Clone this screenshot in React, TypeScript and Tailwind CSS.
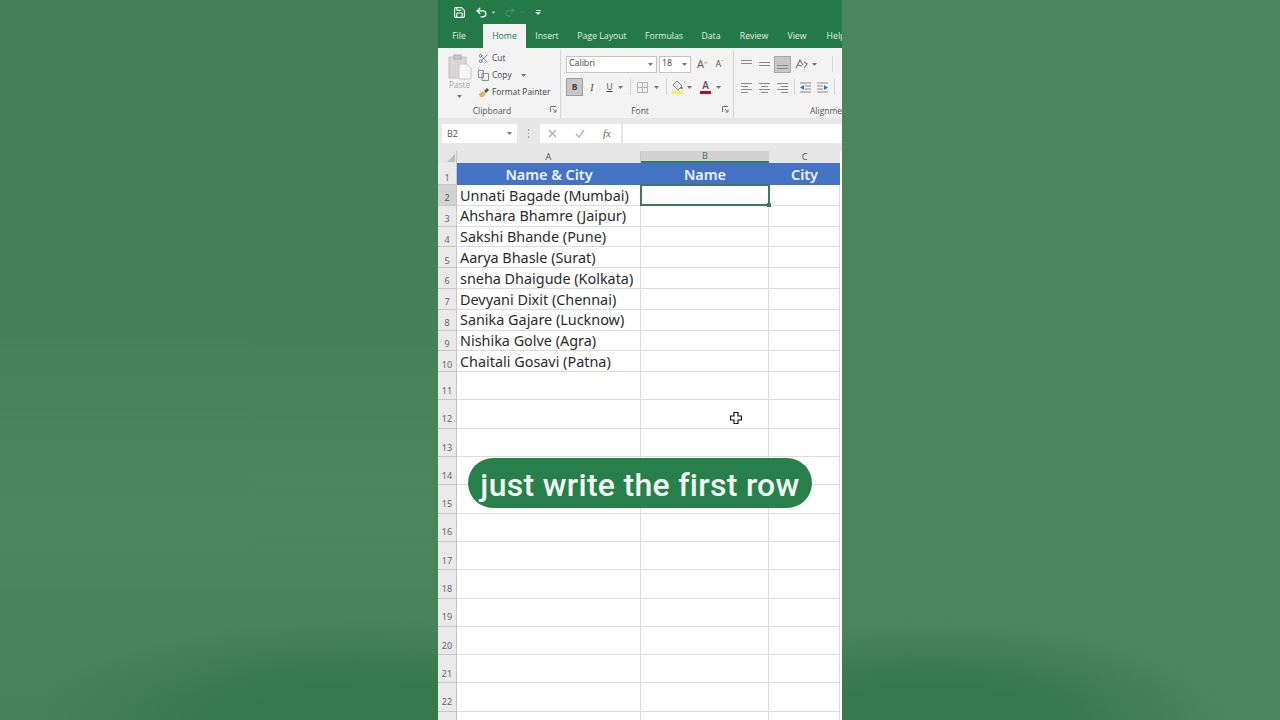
import type { ReactNode } from 'react';
import { Redo2, Save, Scissors, Undo2 } from 'lucide-react';

const tabs = [
  { label: 'File', w: 'w-[45px] pr-[3px]' },
  { label: 'Home', w: 'w-[43px]', active: true },
  { label: 'Insert', w: 'w-[42px]' },
  { label: 'Page Layout', w: 'w-[68px]' },
  { label: 'Formulas', w: 'w-[56px]' },
  { label: 'Data', w: 'w-[38px]' },
  { label: 'Review', w: 'w-[48px]' },
  { label: 'View', w: 'w-[38px]' },
  { label: 'Help', w: 'w-[40px]' },
];

const people = [
  'Unnati Bagade (Mumbai)',
  'Ahshara Bhamre (Jaipur)',
  'Sakshi Bhande (Pune)',
  'Aarya Bhasle (Surat)',
  'sneha Dhaigude (Kolkata)',
  'Devyani Dixit (Chennai)',
  'Sanika Gajare (Lucknow)',
  'Nishika Golve (Agra)',
  'Chaitali Gosavi (Patna)',
];

const emptyRows = [11, 12, 13, 14, 15, 16, 17, 18, 19, 20, 21, 22, 23];

const Chevron = () => (
  <svg width="5" height="3" viewBox="0 0 5 3" className="shrink-0">
    <path d="M0 0h5L2.5 3z" fill="#777" />
  </svg>
);

const Launcher = () => (
  <svg width="7" height="7" viewBox="0 0 7 7" className="shrink-0">
    <path d="M.5 6V.5H6M3 3l3 3M6 3.5V6H3.5" fill="none" stroke="#777" strokeWidth="1" />
  </svg>
);

// alignment glyphs are just stacks of grey lines
const Lines = ({ rows, w = 11 }: { rows: number[][]; w?: number }) => (
  <svg width={w} height="11" viewBox={`0 0 ${w} 11`} className="shrink-0">
    {rows.map(([x, y, len], i) => (
      <rect key={i} x={x} y={y} width={len} height="1" fill="#8a8a8a" />
    ))}
  </svg>
);

const Sep = ({ className = '' }: { className?: string }) => (
  <div className={`h-[16px] w-px bg-[#d6d6d6] ${className}`} />
);

const Group = ({ children, className }: { children: ReactNode; className: string }) => (
  <div className={`flex h-[68px] shrink-0 flex-col border-r border-[#d4d4d4] ${className}`}>{children}</div>
);

const GroupLabel = ({ label, className = '' }: { label: string; className?: string }) => (
  <div className={`relative mt-auto flex h-[14px] items-center justify-center text-[8.5px] text-[#555] ${className}`}>
    {label}
  </div>
);

const RowHead = ({ n, active, tall }: { n: number; active?: boolean; tall?: boolean }) => (
  <div
    className={`flex items-end justify-center border-b border-r border-[#c6c6c6] text-[9px] ${tall ? 'pb-[2px]' : ''} ${
      active ? 'bg-[#d2d2d2] text-[#2f6f4a]' : 'bg-[#e9e9e9] text-[#666]'
    }`}
  >
    {n}
  </div>
);

const Cell = ({ className = '', children }: { className?: string; children?: ReactNode }) => (
  <div className={`border-b border-r border-[#dcdcdc] ${className}`}>{children}</div>
);

export default function App() {
  return (
    <div className="relative flex h-[720px] w-[1280px] overflow-hidden bg-[#478a5d] font-['Open_Sans',sans-serif]">
      <div className="h-full w-[438px] bg-[radial-gradient(ellipse_340px_100px_at_85%_100%,#36774b_35%,transparent_100%),linear-gradient(180deg,#447f57_0%,#447f57_40%,#4a855b_70%,#46815a_100%)]" />

      <div className="relative h-full w-[404px] overflow-hidden bg-white">
        {/* title bar */}
        <div className="flex h-[24px] items-center gap-[6px] bg-[#237a47] pl-[15px] text-white">
          <Save size={13} strokeWidth={2} />
          <Undo2 size={13} strokeWidth={2.5} className="ml-[3px]" />
          <span className="-ml-[3px] scale-75 brightness-200">
            <Chevron />
          </span>
          <Redo2 size={12} strokeWidth={2} className="ml-[2px] text-[#4f9a6c]" />
          <span className="-ml-[2px] opacity-40">
            <Chevron />
          </span>
          <span className="ml-[4px] flex flex-col items-center gap-[1px]">
            <span className="h-px w-[5px] bg-[#d5e6da]" />
            <span className="h-0 w-0 border-x-[3px] border-t-[3px] border-x-transparent border-t-[#d5e6da]" />
          </span>
        </div>

        {/* tabs */}
        <div className="flex h-[24px] items-stretch bg-[#237a47] pt-[1px] text-[8.7px] text-[#e3efe7]">
          {tabs.map((t) => (
            <div
              key={t.label}
              className={`flex shrink-0 items-center justify-center ${t.w} ${
                t.active ? '-mt-[1px] bg-[#f3f3f3] pt-[1px] text-[#237a47]' : ''
              }`}
            >
              {t.label}
            </div>
          ))}
        </div>

        {/* ribbon */}
        <div className="flex h-[70px] overflow-hidden bg-[#f3f3f3] pt-[2px] text-[8.4px] text-[#444]">
          <Group className="w-[123px]">
            <div className="flex">
              <div className="flex w-[40px] flex-col items-center pl-[3px] pt-[4px] text-[#a9a9a9]">
                <svg width="24" height="26" viewBox="0 0 24 26">
                  <rect x="1" y="3" width="17" height="21" fill="#d9d5d2" stroke="#c4c0bd" />
                  <rect x="6" y="1" width="7" height="4" fill="#c9c9c9" stroke="#b0b0b0" />
                  <path d="M11 10h8l4 4v11H11z" fill="#f6f6f6" stroke="#c8c8c8" />
                </svg>
                <span className="mt-[-1px] text-[8.5px]">Paste</span>
                <span className="mt-[3px]">
                  <Chevron />
                </span>
              </div>
              <div className="flex flex-col">
                <div className="flex h-[17px] items-center gap-[3px]">
                  <Scissors size={11} className="text-[#5b7f9f]" />
                  <span>Cut</span>
                </div>
                <div className="flex h-[17px] items-center gap-[3px]">
                  <svg width="11" height="11" viewBox="0 0 11 11">
                    <path d="M.5.5h5v7h-5zM4 3.5h6.5v7H4z" fill="#f5f5f5" stroke="#8a8f96" />
                  </svg>
                  <span>Copy</span>
                  <span className="ml-[6px]">
                    <Chevron />
                  </span>
                </div>
                <div className="flex h-[17px] items-center gap-[2px]">
                  <svg width="12" height="11" viewBox="0 0 12 11">
                    <path d="M1 7l4-3 3 3-3 3H2z" fill="#e0b45e" />
                    <path d="M6 4l3-3 2 2-3 3z" fill="#555" />
                  </svg>
                  <span>Format Painter</span>
                </div>
              </div>
            </div>
            <GroupLabel label="Clipboard" className="pr-[14px]" />
            <span className="absolute left-[112px] top-[106px]">
              <Launcher />
            </span>
          </Group>

          <Group className="w-[173px] pl-[5px]">
            <div className="flex h-[24px] items-center pt-[4px] text-[8.8px]">
              <div className="flex h-[17px] w-[91px] items-center justify-between border border-[#c3c3c3] bg-white pl-[2px] pr-[3px]">
                Calibri
                <Chevron />
              </div>
              <div className="ml-[2px] flex h-[17px] w-[32px] items-center justify-between border border-[#c3c3c3] bg-white pl-[2px] pr-[3px]">
                18
                <Chevron />
              </div>
              <span className="ml-[6px] text-[11px] text-[#555]">
                A<sup className="text-[6px] text-[#777]">^</sup>
              </span>
              <span className="ml-[8px] text-[9px] text-[#555]">
                A<sup className="text-[6px] text-[#777]">ˇ</sup>
              </span>
            </div>
            <div className="mt-[4px] flex h-[18px] items-center">
              <div className="flex h-[18px] w-[17px] items-center justify-center border border-[#9c9c9c] bg-[#c6c6c6] font-bold">
                B
              </div>
              <span className="ml-[5px] w-[8px] text-center font-['Liberation_Serif',serif] text-[10px] italic">I</span>
              <span className="ml-[9px] w-[9px] text-center underline">U</span>
              <span className="ml-[4px]">
                <Chevron />
              </span>
              <Sep className="ml-[7px]" />
              <svg width="11" height="11" viewBox="0 0 11 11" className="ml-[6px]">
                <path d="M.5.5h10v10H.5zM5.5.5v10M.5 5.5h10" fill="none" stroke="#b5b5b5" />
              </svg>
              <span className="ml-[6px]">
                <Chevron />
              </span>
              <Sep className="ml-[7px]" />
              <svg width="13" height="14" viewBox="0 0 13 14" className="ml-[4px]">
                <path d="M6 1l5 5-4 4-5-5z" fill="#f2f2f2" stroke="#777" />
                <circle cx="10.5" cy="8" r="1.2" fill="#777" />
                <rect x="1" y="11" width="11" height="3" fill="#f4f25a" />
              </svg>
              <span className="ml-[3px]">
                <Chevron />
              </span>
              <div className="ml-[8px] flex w-[11px] flex-col items-center text-[10px] font-semibold leading-[10px] text-[#555]">
                A
                <span className="mt-[1px] h-[3px] w-[11px] bg-[#b3121d]" />
              </div>
              <span className="ml-[5px]">
                <Chevron />
              </span>
            </div>
            <GroupLabel label="Font" className="pr-[19px]" />
            <span className="absolute left-[284px] top-[106px]">
              <Launcher />
            </span>
          </Group>

          <Group className="w-[108px] border-r-0 pl-[7px]">
            <div className="flex h-[24px] items-center gap-[7px] pt-[4px]">
              <Lines rows={[[0, 1, 11], [0, 4, 11]]} />
              <Lines rows={[[0, 3, 11], [0, 6, 11]]} />
              <div className="-ml-[3px] flex h-[17px] w-[17px] items-center justify-center border border-[#a8a8a8] bg-[#c6c6c6]">
                <Lines rows={[[0, 6, 11], [0, 9, 11]]} />
              </div>
              <svg width="13" height="11" viewBox="0 0 13 11" className="-ml-[3px]">
                <path d="M1 9l4-8 3 5M3 6l4 1M9 3l3 2-3 4" fill="none" stroke="#777" strokeWidth="1.2" />
              </svg>
              <span className="-ml-[3px]">
                <Chevron />
              </span>
              <Sep className="ml-[8px]" />
            </div>
            <div className="mt-[4px] flex h-[18px] items-center gap-[7px]">
              <Lines rows={[[0, 1, 11], [0, 4, 7], [0, 7, 11], [0, 10, 7]]} />
              <Lines rows={[[0, 1, 11], [2, 4, 7], [0, 7, 11], [2, 10, 7]]} />
              <Lines rows={[[0, 1, 11], [4, 4, 7], [0, 7, 11], [4, 10, 7]]} />
              <Sep className="-ml-[1px]" />
              <svg width="11" height="11" viewBox="0 0 11 11" className="-ml-[2px]">
                <path d="M0 1h11M5 4h6M5 7h6M0 10h11" stroke="#8a8a8a" />
                <path d="M4 3v5L0 5.5z" fill="#3a77b8" />
              </svg>
              <svg width="11" height="11" viewBox="0 0 11 11" className="-ml-[1px]">
                <path d="M0 1h11M0 4h6M0 7h6M0 10h11" stroke="#8a8a8a" />
                <path d="M7 3v5l4-2.500z" fill="#3a77b8" />
              </svg>
              <Sep className="-ml-[1px]" />
            </div>
            <div className="mt-auto flex h-[14px] items-center pl-[69px] text-[8.5px] font-medium text-[#555]">Alignment</div>
          </Group>
        </div>

        {/* formula bar */}
        <div className="flex h-[33px] items-start bg-[#e7e7e7] pl-[4px] pt-[6px] text-[9px] text-[#555]">
          <div className="flex h-[19px] w-[75px] items-center justify-between bg-white pl-[5px] pr-[5px]">
            B2
            <Chevron />
          </div>
          <div className="flex h-[19px] w-[23px] flex-col items-center justify-center gap-[2px]">
            <span className="h-[1.5px] w-[1.5px] bg-[#999]" />
            <span className="h-[1.5px] w-[1.5px] bg-[#999]" />
            <span className="h-[1.5px] w-[1.5px] bg-[#999]" />
          </div>
          <div className="flex h-[19px] w-[81px] items-center bg-white pl-[8px] text-[#aaa]">
            <svg width="9" height="9" viewBox="0 0 9 9">
              <path d="M1 1l7 7M8 1L1 8" stroke="#aaa" strokeWidth="1.2" />
            </svg>
            <svg width="10" height="9" viewBox="0 0 10 9" className="ml-[18px]">
              <path d="M1 5l3 3 5-7" fill="none" stroke="#aaa" strokeWidth="1.2" />
            </svg>
            <span className="ml-[18px] font-['Liberation_Serif',serif] text-[11px] italic text-[#666]">fx</span>
          </div>
          <div className="ml-[2px] h-[19px] flex-1 bg-white" />
        </div>

        {/* sheet */}
        <div className="grid grid-cols-[19px_184px_128px_71px_2px] grid-rows-[12px_22px_repeat(9,20.8px)_repeat(13,28.3px)] bg-white font-['Noto_Sans',sans-serif] text-[14.4px] text-[#2a2a2a]">
          <div className="relative border-r border-[#c6c6c6] bg-[#e6e6e6]">
            <span className="absolute bottom-[1px] right-[1px] h-0 w-0 border-b-[8px] border-l-[8px] border-b-[#bdbdbd] border-l-transparent" />
          </div>
          <div className="flex items-center justify-center border-r border-[#c6c6c6] bg-[#e6e6e6] text-[9px] text-[#555]">A</div>
          <div className="flex items-center justify-center border-b-2 border-[#3f7a58] bg-[#d2d2d2] text-[9px] text-[#3f7a58]">B</div>
          <div className="flex items-center justify-center bg-[#e6e6e6] text-[9px] text-[#555]">C</div>
          <div className="bg-white" />

          <RowHead n={1} />
          {['Name & City', 'Name', 'City'].map((h) => (
            <div key={h} className="flex items-center justify-center bg-[#4472c4] pt-[2px] font-semibold text-[#eef3fb]">
              {h}
            </div>
          ))}
          <div />

          {people.map((name, i) => (
            <div key={name} className="contents">
              <RowHead n={i + 2} active={i === 0} />
              <Cell className="flex items-center whitespace-nowrap pl-[3px] pt-[1px]">{name}</Cell>
              {i === 0 ? (
                <div className="relative">
                  <div className="absolute -inset-x-px -top-px bottom-0 border-2 border-[#3f7a58]" />
                  <span className="absolute -bottom-[1px] -right-[2px] h-[4px] w-[4px] bg-[#3f7a58]" />
                </div>
              ) : (
                <Cell />
              )}
              <Cell />
              <div />
            </div>
          ))}

          {emptyRows.map((n) => (
            <div key={n} className="contents">
              <RowHead n={n} tall />
              <Cell />
              <Cell />
              <Cell />
              <div />
            </div>
          ))}
        </div>

        {/* caption over the sheet */}
        <div className="absolute left-[30px] top-[458px] flex h-[50px] w-[344px] items-center justify-center rounded-[25px] bg-[#27804a] pt-[3px] font-['Roboto',sans-serif] text-[32px] font-medium tracking-[0.3px] text-[#f2f8f3]">
          just write the first row
        </div>

        {/* excel cross cursor */}
        <svg width="12" height="12" viewBox="0 0 12 12" className="absolute left-[292px] top-[412px]">
          <path d="M4 .5h4v3.500h3.500v4H8v3.500H4V8H.5V4H4z" fill="#fff" stroke="#111" strokeWidth="1.200" />
        </svg>
      </div>

      <div className="h-full w-[438px] bg-[radial-gradient(ellipse_300px_100px_at_20%_100%,#36774b_35%,transparent_100%),linear-gradient(180deg,#4b855d,#4b855d)]" />
    </div>
  );
}
